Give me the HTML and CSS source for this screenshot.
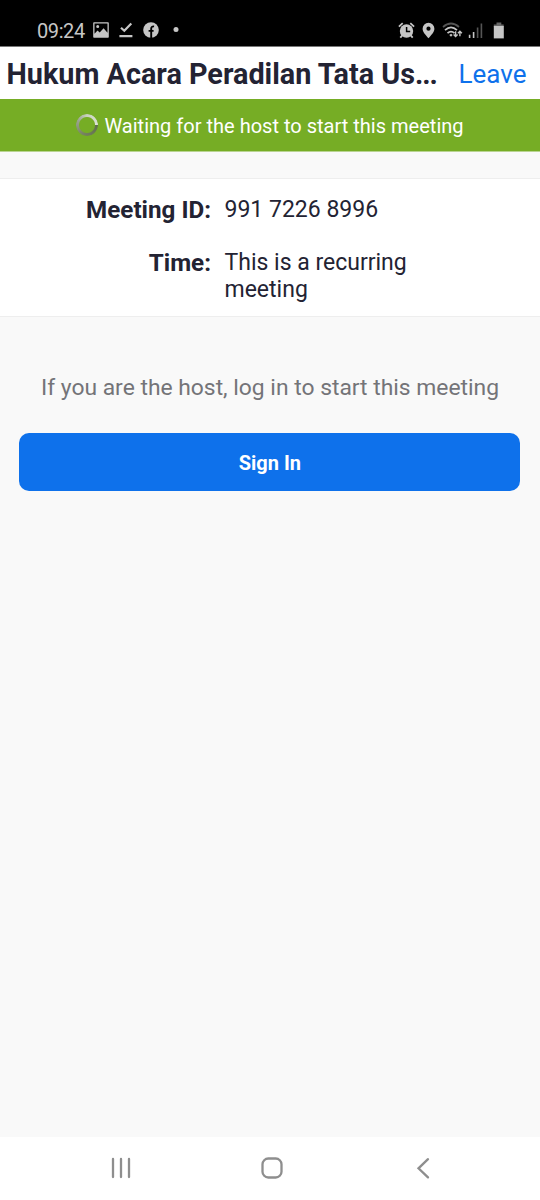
FILE: index.html
```html
<!DOCTYPE html>
<html lang="id">
<head>
<meta charset="utf-8">
<meta name="viewport" content="width=device-width, initial-scale=1">
<title>Waiting for host</title>
<link rel="stylesheet" href="styles.css">
</head>
<body>
<div class="screen">
  <div class="status">
    <div class="status-left">
      <span class="clock">09:24</span>
      <svg width="16" height="16" viewBox="0 0 16 16"><path fill="currentColor" fill-rule="evenodd" d="M1 .2h14q.8 0 .8.8v14q0 .8-.8.8H1q-.8 0-.8-.8V1Q.2.2 1 .2ZM1.500 1.500v10.300l3-3.400 2.200 2.200L10.600 6.300l3.900 4.500V1.500ZM4.700 3a1.500 1.500 0 1 1 0 3 1.500 1.500 0 0 1 0-3Z"/></svg>
      <svg width="14" height="16" viewBox="0 0 14 16" fill="none" stroke="currentColor" stroke-width="2.200"><path d="M2 5.800 5.300 8.800 12.300 1.500M.4 14.200h13"/></svg>
      <svg width="16" height="16" viewBox="0 0 16 16"><circle cx="8" cy="8" r="7.800" fill="currentColor"/><path d="M8.200 16V6.700q0-2.500 2.900-2.300M5.600 8.900h5" fill="none" stroke="#000" stroke-width="1.900"/></svg>
      <svg class="dot" width="6" height="16" viewBox="0 0 6 16"><circle cx="3" cy="7.600" r="2.500" fill="currentColor"/></svg>
    </div>
    <div class="status-right">
      <svg width="17" height="17" viewBox="0 0 17 17" fill="none" stroke="currentColor"><circle cx="8.500" cy="9" r="6.700" fill="currentColor" stroke="none"/><path stroke-width="1.800" d="M.9 4.600 4.700 1.200M12.300 1.200l3.800 3.400M4.500 13.200 2.300 15.700M12.500 13.200l2.200 2.500"/><path stroke="#000" stroke-width="1.500" d="M8.600 5v4.600h3.600"/></svg>
      <svg width="13" height="17" viewBox="0 0 13 17"><path fill="currentColor" fill-rule="evenodd" d="M6.500.8a5.900 5.900 0 0 1 5.900 5.900c0 3.300-3.400 6.500-5.900 9.600C4 13.200.6 10 .6 6.700A5.900 5.900 0 0 1 6.500.8Zm0 3.800a2.100 2.100 0 1 0 0 4.200 2.100 2.100 0 0 0 0-4.200Z"/></svg>
      <svg width="21" height="17" viewBox="0 0 21 17" fill="none" stroke="currentColor" stroke-width="1.700"><path stroke="#555" d="M1 5q8-7 16 0"/><path d="M3 8.200q6-5.600 12 0M5.500 11.200q3.500-3.300 7 0"/><path d="m7.300 13 1.800-1.200 1.500 1.200-1.600 1.700Z" fill="currentColor" stroke="none"/><path stroke-width="1.400" d="M13.600 9.300v5M11.600 12.500l2 2 2-2M17.900 14.200V9.400M15.900 11.300l2-2 2 2"/></svg>
      <svg class="signal" width="15" height="17" viewBox="0 0 15 17"><path fill="currentColor" d="M.8 12.800h1.600V16H.8ZM4.800 10h1.600v6H4.800Z"/><path fill="#555" d="M8.800 5.500h1.600V16H8.800ZM12.600 1.500h1.600V16h-1.600Z"/></svg>
      <svg class="battery" width="12" height="17" viewBox="0 0 12 17"><path fill="#666" d="M3.500 .6h4.800v1.800h2.400v2H.8v-2h2.700Z"/><path fill="currentColor" d="M.8 4h10v12.400H.8Z"/></svg>
    </div>
  </div>
  <header class="titlebar">
    <h1 class="title">Hukum Acara Peradilan Tata Us<span class="dots">...</span></h1>
    <a class="leave">Leave</a>
  </header>
  <div class="banner">
    <span class="spinner"></span>
    <span>Waiting for the host to start this meeting</span>
  </div>
  <dl class="details">
    <dt>Meeting ID:</dt><dd>991 7226 8996</dd>
    <dt>Time:</dt><dd>This is a recurring meeting</dd>
  </dl>
  <main class="host">
    <p class="hint">If you are the host, log in to start this meeting</p>
    <button class="signin">Sign In</button>
  </main>
  <nav class="nav">
    <svg width="24" height="24" viewBox="0 0 24 24"><path d="M4 3v18M12 3v18M20 3v18"/></svg>
    <svg width="24" height="24" viewBox="0 0 24 24"><rect x="2.500" y="2.500" width="19" height="19" rx="5.800"/></svg>
    <svg width="24" height="24" viewBox="0 0 24 24"><path d="M17 3.200 7.500 12.300 17 21.400"/></svg>
  </nav>
</div>
</body>
</html>
```

FILE: styles.css
```css
* { box-sizing: border-box; }
body { margin: 0; font-family: Roboto, sans-serif; color: #232333; }
.screen { width: 540px; height: 1200px; display: flex; flex-direction: column; background: #f9f9f9; }

.status { height: 47px; flex: none; padding: 14px 35px 0 37px; display: flex; justify-content: space-between; background: #000; border-bottom: 1px solid #777; color: #c6c6c6; }
.status-left, .status-right { display: flex; align-items: center; height: 32px; }
.clock { width: 56px; padding-top: 1px; font-size: 20px; line-height: 32px; letter-spacing: -0.4px; }
.status-left svg + svg { margin-left: 10px; }
.status-left svg + .dot { margin-left: 14px; }
.status-right { gap: 7px; }
.status-right .battery { margin-left: 3px; }
.status-right .signal { margin-left: -2px; }

.titlebar { height: 52px; flex: none; padding: 0 13.5px 0 6.5px; display: flex; justify-content: space-between; align-items: center; background: #fff; white-space: nowrap; }
.title { margin: 2px 0 0; font-size: 28.8px; line-height: 34px; font-weight: 700; }
.dots { letter-spacing: -1.1px; }
.leave { padding-top: 1px; font-size: 26px; line-height: 32px; color: #0e71eb; }

.banner { height: 53px; flex: none; padding: 1px 0 0; display: flex; justify-content: center; align-items: center; gap: 6px; background: #76ad25; border-bottom: 1px solid #b9d492; color: #fff; font-size: 20.05px; }
.spinner { width: 22px; height: 22px; margin-top: -1px; border-radius: 50%; background: conic-gradient(#c9d2bd, #dce2d3 90deg, #60704c 92deg, #76815f 200deg, #9ba590 300deg, #c9d2bd); -webkit-mask: radial-gradient(circle, transparent 7.5px, #000 8.5px); mask: radial-gradient(circle, transparent 7.5px, #000 8.5px); }

.details { margin: 26px 0 0; height: 139px; flex: none; padding: 17px 0 0; display: grid; grid-template-columns: 211px 200px; column-gap: 13.5px; grid-template-rows: 53px 54px; background: #fff; border-top: 1px solid #eee; border-bottom: 1px solid #eee; }
.details dt { text-align: right; font-size: 24.2px; line-height: 29px; font-weight: 700; }
.details dd { margin: 0; font-size: 23px; line-height: 27px; }

.host { flex: 1; padding: 57px 19.4px 0; }
.hint { margin: 0; text-align: center; white-space: nowrap; font-size: 22.85px; line-height: 27px; color: #747478; }
.signin { display: block; width: 501px; height: 58px; margin-top: 32px; padding: 2px 0 0; border: 0; border-radius: 10px; background: #0e71eb; color: #fff; font: 700 20px Roboto, sans-serif; }

.nav { height: 63px; flex: none; padding: 0 105px 2px 109px; display: flex; justify-content: space-between; align-items: center; background: #fff; }
.nav svg { fill: none; stroke: #8e8e8e; stroke-width: 2.3; stroke-linecap: round; }
```
